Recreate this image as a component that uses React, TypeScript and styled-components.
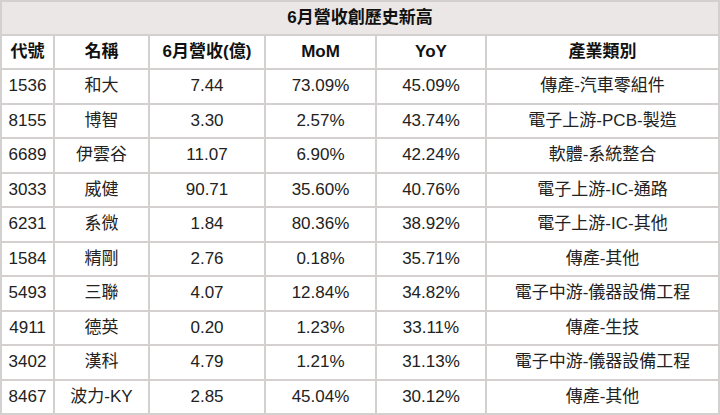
import styled, { createGlobalStyle } from "styled-components";

type Row = {
  code: string;
  name: string;
  revenue: string;
  mom: string;
  yoy: string;
  industry: string;
};

const rows: Row[] = [
  { code: "1536", name: "和大", revenue: "7.44", mom: "73.09%", yoy: "45.09%", industry: "傳產-汽車零組件" },
  { code: "8155", name: "博智", revenue: "3.30", mom: "2.57%", yoy: "43.74%", industry: "電子上游-PCB-製造" },
  { code: "6689", name: "伊雲谷", revenue: "11.07", mom: "6.90%", yoy: "42.24%", industry: "軟體-系統整合" },
  { code: "3033", name: "威健", revenue: "90.71", mom: "35.60%", yoy: "40.76%", industry: "電子上游-IC-通路" },
  { code: "6231", name: "系微", revenue: "1.84", mom: "80.36%", yoy: "38.92%", industry: "電子上游-IC-其他" },
  { code: "1584", name: "精剛", revenue: "2.76", mom: "0.18%", yoy: "35.71%", industry: "傳產-其他" },
  { code: "5493", name: "三聯", revenue: "4.07", mom: "12.84%", yoy: "34.82%", industry: "電子中游-儀器設備工程" },
  { code: "4911", name: "德英", revenue: "0.20", mom: "1.23%", yoy: "33.11%", industry: "傳產-生技" },
  { code: "3402", name: "漢科", revenue: "4.79", mom: "1.21%", yoy: "31.13%", industry: "電子中游-儀器設備工程" },
  { code: "8467", name: "波力-KY", revenue: "2.85", mom: "45.04%", yoy: "30.12%", industry: "傳產-其他" },
];

const columns = [
  { label: "代號", width: 53 },
  { label: "名稱", width: 95 },
  { label: "6月營收(億)", width: 116 },
  { label: "MoM", width: 111 },
  { label: "YoY", width: 110 },
  { label: "產業類別", width: 233 },
];

export default function App() {
  return (
    <>
      <GlobalStyle />
      <Table>
        <colgroup>
          {columns.map((c) => (
            <col key={c.label} style={{ width: c.width }} />
          ))}
        </colgroup>
        <thead>
          <tr>
            <TitleCell colSpan={6}>6月營收創歷史新高</TitleCell>
          </tr>
          <tr>
            {columns.map((c) => (
              <HeaderCell key={c.label}>{c.label}</HeaderCell>
            ))}
          </tr>
        </thead>
        <tbody>
          {rows.map((r) => (
            <tr key={r.code}>
              <BodyCell>{r.code}</BodyCell>
              <BodyCell>{r.name}</BodyCell>
              <BodyCell>{r.revenue}</BodyCell>
              <BodyCell>{r.mom}</BodyCell>
              <BodyCell>{r.yoy}</BodyCell>
              <BodyCell>{r.industry}</BodyCell>
            </tr>
          ))}
        </tbody>
      </Table>
    </>
  );
}

const GlobalStyle = createGlobalStyle`
  html, body {
    margin: 0;
    padding: 0;
    background: #ffffff;
  }
  body {
    font-family: "Liberation Sans", "Noto Sans CJK TC", sans-serif;
  }
`;

const Table = styled.table`
  width: 720px;
  height: 415px;
  border-collapse: collapse;
  table-layout: fixed;
  border: 2px solid #d4d0cf;

  td,
  th {
    border: 2px solid #d4d0cf;
    padding: 0;
    text-align: center;
    vertical-align: middle;
    white-space: nowrap;
    height: 32px;
    line-height: 20px;
  }
`;

const TitleCell = styled.th`
  background: #ebe7e6;
  font-size: 17px;
  font-weight: 700;
  color: #111111;
`;

const HeaderCell = styled.th`
  font-size: 17px;
  font-weight: 700;
  color: #111111;
`;

const BodyCell = styled.td`
  font-size: 17px;
  font-weight: 400;
  color: #222222;
`;
